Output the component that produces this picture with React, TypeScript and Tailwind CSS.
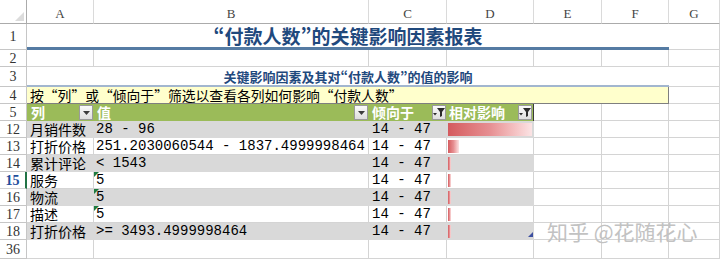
import React from 'react';

const COLS = 'grid grid-cols-[27px_67px_275px_78px_87px_68px_67px_51px]';
const CJK = "font-['Noto_Sans_CJK_SC',sans-serif]";
const MONO = "font-['Liberation_Mono','Noto_Sans_CJK_SC',monospace]";
const HEAD = "font-['Liberation_Serif','Noto_Sans_CJK_SC',serif]";

const rows = [
  { n: 12, col: '月销件数', val: '28 - 96', bar: 84, gray: true },
  { n: 13, col: '打折价格', val: '251.2030060544 - 1837.4999998464', bar: 11 },
  { n: 14, col: '累计评论', val: '< 1543', bar: 3, gray: true },
  { n: 15, col: '服务', val: '5', bar: 3, flag: true, sel: true },
  { n: 16, col: '物流', val: '5', bar: 3, gray: true, flag: true },
  { n: 17, col: '描述', val: '5', bar: 3, flag: true },
  { n: 18, col: '打折价格', val: '>= 3493.4999998464', bar: 3, gray: true, last: true },
];

function RowNum({ n, sel }: { n: number | string; sel?: boolean }) {
  return (
    <div
      className={`${HEAD} flex items-center justify-center border-b border-r text-[14px] leading-[15px] ${
        sel ? 'border-r-2 border-r-[#217346] border-b-[#d4d4d4] font-bold text-[#1f4e9c]' : 'border-[#c6c6c6] text-[#333]'
      }`}
    >
      {n}
    </div>
  );
}

function Cell({ children, className = '' }: { children?: React.ReactNode; className?: string }) {
  return <div className={`border-b border-r border-[#d4d4d4] ${className}`}>{children}</div>;
}

function DropButton({ filter }: { filter?: boolean }) {
  return (
    <div className="flex h-[15px] w-[14px] shrink-0 items-center justify-center border border-[#9a9a9a] bg-linear-to-b from-[#fafafa] to-[#dedede]">
      {filter ? (
        <svg width="12" height="11" viewBox="0 0 12 11">
          <path d="M4 1h8L9 5v4L7 10V5z" fill="#2b2b2b" />
          <path d="M0 6h4L2 8.5z" fill="#2b2b2b" />
        </svg>
      ) : (
        <svg width="7" height="4" viewBox="0 0 7 4">
          <path d="M0 0h7L3.5 4z" fill="#3c3c3c" />
        </svg>
      )}
    </div>
  );
}

function GreenFlag() {
  return (
    <svg width="5" height="5" viewBox="0 0 5 5" className="absolute left-0 top-0">
      <path d="M0 0h5L0 5z" fill="#1e7b40" />
    </svg>
  );
}

export default function App() {
  return (
    <div className="relative h-[259px] w-[720px] overflow-hidden bg-white text-black">
      {/* column headers */}
      <div className={`${COLS} h-[24px]`}>
        <div className="relative border-b border-r border-[#ababab]">
          <svg width="9" height="9" viewBox="0 0 9 9" className="absolute bottom-[2px] right-[2px]">
            <path d="M9 0v9H0z" fill="#dcdcdc" />
          </svg>
        </div>
        {['A', 'B', 'C', 'D', 'E', 'F', 'G'].map((c) => (
          <div
            key={c}
            className={`${HEAD} flex items-end justify-center border-b border-r border-b-[#ababab] border-r-[#dadada] pb-[2px] text-[13px] leading-[15px] text-[#444]`}
          >
            {c}
          </div>
        ))}
      </div>

      {/* row 1 title */}
      <div className={`${COLS} h-[26px]`}>
        <RowNum n={1} />
        <div className="col-span-6 flex items-center justify-center border-b-[3px] border-[#557ba3]">
          <span className={`${CJK} text-[19px] leading-[20px] font-bold text-[#1f497d] [font-feature-settings:'pwid']`}>
            “付款人数”的关键影响因素报表
          </span>
        </div>
        <Cell />
      </div>

      {/* row 2 */}
      <div className={`${COLS} h-[17px]`}>
        <RowNum n={2} />
        <Cell />
        <Cell />
        <Cell />
        <Cell />
        <Cell />
        <Cell />
        <Cell />
      </div>

      {/* row 3 */}
      <div className={`${COLS} h-[20px]`}>
        <RowNum n={3} />
        <div className="col-span-6 flex items-center justify-center border-b-2 border-[#a2b6cf]">
          <span className={`${CJK} text-[13px] leading-[15px] font-bold text-[#1f497d] [font-feature-settings:'pwid']`}>
            关键影响因素及其对“付款人数”的值的影响
          </span>
        </div>
        <Cell />
      </div>

      {/* row 4 note */}
      <div className={`${COLS} h-[17px]`}>
        <RowNum n={4} />
        <div className="col-span-6 flex items-center border-b border-r border-[#7f7f7f] bg-[#ffffcc] pl-[3px]">
          <span className={`${CJK} text-[13.8px] leading-[15px] [font-feature-settings:'fwid']`}>
            按“列”或“倾向于”筛选以查看各列如何影响“付款人数”
          </span>
        </div>
        <Cell />
      </div>

      {/* row 5 table header */}
      <div className={`${COLS} h-[17px]`}>
        <RowNum n={5} />
        <div className={`${CJK} flex items-center justify-between bg-[#9bbb59] pl-[4px] pr-[1px] text-[14px] leading-[15px] font-bold text-white`}>
          <span>列</span>
          <DropButton />
        </div>
        <div className={`${CJK} flex items-center justify-between bg-[#9bbb59] pl-[3px] pr-[1px] text-[14px] leading-[15px] font-bold text-white`}>
          <span>值</span>
          <DropButton />
        </div>
        <div className={`${CJK} flex items-center justify-between bg-[#9bbb59] pl-[3px] pr-[1px] text-[14px] leading-[15px] font-bold text-white`}>
          <span>倾向于</span>
          <DropButton filter />
        </div>
        <div className={`${CJK} flex items-center justify-between border-r border-[#3a3a3a] bg-[#9bbb59] pl-[2px] pr-[1px] text-[14px] leading-[15px] font-bold text-white`}>
          <span>相对影响</span>
          <DropButton filter />
        </div>
        <Cell />
        <Cell />
        <Cell />
      </div>

      {/* data rows */}
      {rows.map((r) => {
        const bg = r.gray ? 'bg-[#d9d9d9] border-[#d9d9d9]' : 'bg-white';
        return (
          <div key={r.n} className={`${COLS} h-[17px]`}>
            <RowNum n={r.n} sel={r.sel} />
            <Cell className={`${CJK} ${bg} flex items-center pl-[3px] text-[14px] leading-[15px]`}>{r.col}</Cell>
            <Cell className={`${MONO} ${bg} relative flex items-center pl-[2px] text-[14px] leading-[15px]`}>
              {r.flag && <GreenFlag />}
              <span className="whitespace-pre">{r.val}</span>
            </Cell>
            <Cell className={`${MONO} ${bg} flex items-center pl-[3px] text-[14px] leading-[15px]`}>14 - 47</Cell>
            <Cell className={`${bg} relative flex items-center pl-[1px]`}>
              <div
                className="h-[13px] bg-linear-to-r from-[#d45a5e] via-[#e68f92] to-[#fbe4e5]"
                style={{ width: r.bar }}
              />
              {r.last && (
                <svg width="5" height="5" viewBox="0 0 5 5" className="absolute bottom-[2px] right-0">
                  <path d="M5 0v5H0z" fill="#3d4fa0" />
                </svg>
              )}
            </Cell>
            <Cell />
            <Cell />
            <Cell />
          </div>
        );
      })}

      {/* row 36 */}
      <div className={`${COLS} h-[19px]`}>
        <RowNum n={36} />
        <Cell />
        <Cell />
        <Cell />
        <Cell />
        <Cell />
        <Cell />
        <Cell />
      </div>

      {/* watermark */}
      <div className={`${CJK} pointer-events-none absolute left-[547px] top-[220px] text-[21px] leading-[22px] text-[#c2c2c2]`}>
        知乎 @花随花心
      </div>
    </div>
  );
}
